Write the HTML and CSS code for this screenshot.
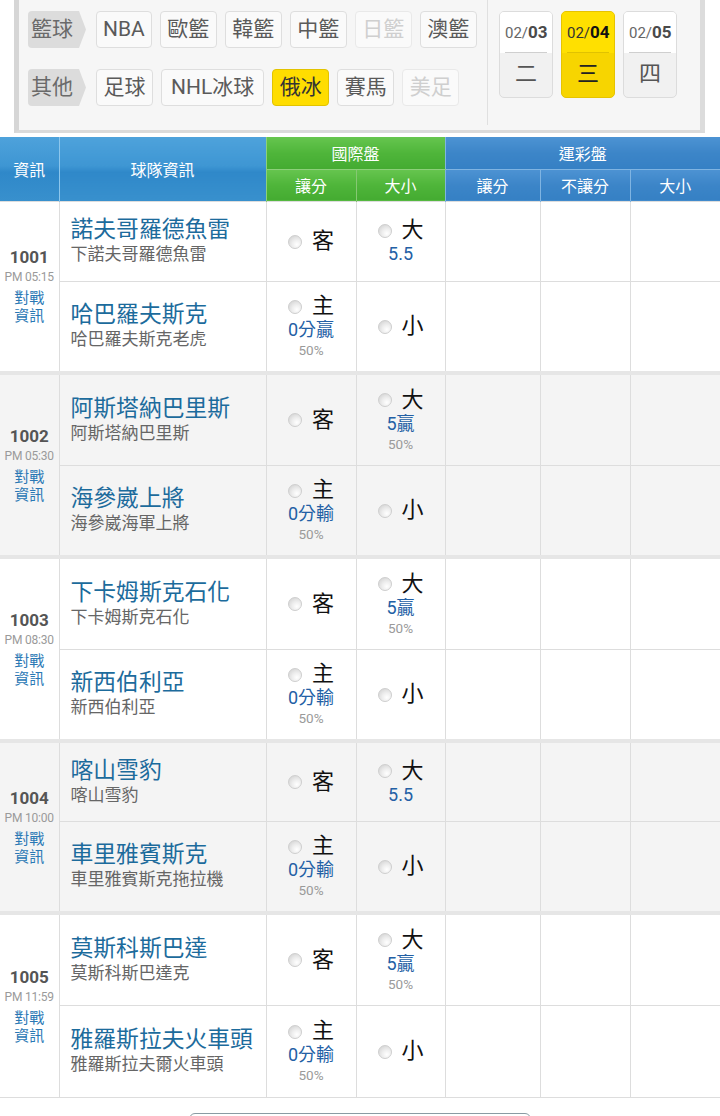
FILE: index.html
```html
<!DOCTYPE html>
<html lang="zh-Hant">
<head>
<meta charset="utf-8">
<title>俄冰</title>
<link rel="stylesheet" href="styles.css">
</head>
<body>
<div class="panel">
  <div class="cats">
    <div class="cat-row">
      <span class="cat-label">籃球</span>
      <span class="btn latin">NBA</span>
      <span class="btn">歐籃</span>
      <span class="btn">韓籃</span>
      <span class="btn">中籃</span>
      <span class="btn off">日籃</span>
      <span class="btn">澳籃</span>
    </div>
    <div class="cat-row">
      <span class="cat-label">其他</span>
      <span class="btn">足球</span>
      <span class="btn wide">NHL冰球</span>
      <span class="btn on">俄冰</span>
      <span class="btn">賽馬</span>
      <span class="btn off">美足</span>
    </div>
  </div>
  <div class="dates">
    <div class="date"><div class="d-top">02/<b>03</b></div><div class="d-bot">二</div></div>
    <div class="date sel"><div class="d-top">02/<b>04</b></div><div class="d-bot">三</div></div>
    <div class="date"><div class="d-top">02/<b>05</b></div><div class="d-bot">四</div></div>
  </div>
</div>

<table class="odds">
  <colgroup>
    <col class="c-info"><col class="c-team"><col class="c-a"><col class="c-b"><col class="c-c"><col class="c-d"><col class="c-e">
  </colgroup>
  <thead>
    <tr class="h1">
      <th rowspan="2" class="hb">資訊</th>
      <th rowspan="2" class="hb">球隊資訊</th>
      <th colspan="2" class="hg">國際盤</th>
      <th colspan="3" class="hs">運彩盤</th>
    </tr>
    <tr class="h2">
      <th class="hg">讓分</th><th class="hg">大小</th>
      <th class="hs">讓分</th><th class="hs">不讓分</th><th class="hs">大小</th>
    </tr>
  </thead>

  <tbody class="match">
    <tr class="short">
      <td rowspan="2" class="info"><div class="num">1001</div><div class="time">PM 05:15</div><div class="vs">對戰<br>資訊</div></td>
      <td class="team"><div class="tname">諾夫哥羅德魚雷</div><div class="tsub">下諾夫哥羅德魚雷</div></td>
      <td class="opt"><div class="pick"><span class="radio"></span><span class="lbl">客</span></div></td>
      <td class="opt"><div class="pick"><span class="radio"></span><span class="lbl">大</span></div><div class="line">5.5</div></td>
      <td></td><td></td><td></td>
    </tr>
    <tr class="tall">
      <td class="team"><div class="tname">哈巴羅夫斯克</div><div class="tsub">哈巴羅夫斯克老虎</div></td>
      <td class="opt"><div class="pick"><span class="radio"></span><span class="lbl">主</span></div><div class="line">0分贏</div><div class="pct">50%</div></td>
      <td class="opt"><div class="pick"><span class="radio"></span><span class="lbl">小</span></div></td>
      <td></td><td></td><td></td>
    </tr>
  </tbody>

  <tbody class="match alt">
    <tr class="tall">
      <td rowspan="2" class="info"><div class="num">1002</div><div class="time">PM 05:30</div><div class="vs">對戰<br>資訊</div></td>
      <td class="team"><div class="tname">阿斯塔納巴里斯</div><div class="tsub">阿斯塔納巴里斯</div></td>
      <td class="opt"><div class="pick"><span class="radio"></span><span class="lbl">客</span></div></td>
      <td class="opt"><div class="pick"><span class="radio"></span><span class="lbl">大</span></div><div class="line">5贏</div><div class="pct">50%</div></td>
      <td></td><td></td><td></td>
    </tr>
    <tr class="tall">
      <td class="team"><div class="tname">海參崴上將</div><div class="tsub">海參崴海軍上將</div></td>
      <td class="opt"><div class="pick"><span class="radio"></span><span class="lbl">主</span></div><div class="line">0分輸</div><div class="pct">50%</div></td>
      <td class="opt"><div class="pick"><span class="radio"></span><span class="lbl">小</span></div></td>
      <td></td><td></td><td></td>
    </tr>
  </tbody>

  <tbody class="match">
    <tr class="tall">
      <td rowspan="2" class="info"><div class="num">1003</div><div class="time">PM 08:30</div><div class="vs">對戰<br>資訊</div></td>
      <td class="team"><div class="tname">下卡姆斯克石化</div><div class="tsub">下卡姆斯克石化</div></td>
      <td class="opt"><div class="pick"><span class="radio"></span><span class="lbl">客</span></div></td>
      <td class="opt"><div class="pick"><span class="radio"></span><span class="lbl">大</span></div><div class="line">5贏</div><div class="pct">50%</div></td>
      <td></td><td></td><td></td>
    </tr>
    <tr class="tall">
      <td class="team"><div class="tname">新西伯利亞</div><div class="tsub">新西伯利亞</div></td>
      <td class="opt"><div class="pick"><span class="radio"></span><span class="lbl">主</span></div><div class="line">0分輸</div><div class="pct">50%</div></td>
      <td class="opt"><div class="pick"><span class="radio"></span><span class="lbl">小</span></div></td>
      <td></td><td></td><td></td>
    </tr>
  </tbody>

  <tbody class="match alt">
    <tr class="short">
      <td rowspan="2" class="info"><div class="num">1004</div><div class="time">PM 10:00</div><div class="vs">對戰<br>資訊</div></td>
      <td class="team"><div class="tname">喀山雪豹</div><div class="tsub">喀山雪豹</div></td>
      <td class="opt"><div class="pick"><span class="radio"></span><span class="lbl">客</span></div></td>
      <td class="opt"><div class="pick"><span class="radio"></span><span class="lbl">大</span></div><div class="line">5.5</div></td>
      <td></td><td></td><td></td>
    </tr>
    <tr class="tall">
      <td class="team"><div class="tname">車里雅賓斯克</div><div class="tsub">車里雅賓斯克拖拉機</div></td>
      <td class="opt"><div class="pick"><span class="radio"></span><span class="lbl">主</span></div><div class="line">0分輸</div><div class="pct">50%</div></td>
      <td class="opt"><div class="pick"><span class="radio"></span><span class="lbl">小</span></div></td>
      <td></td><td></td><td></td>
    </tr>
  </tbody>

  <tbody class="match">
    <tr class="tall">
      <td rowspan="2" class="info"><div class="num">1005</div><div class="time">PM 11:59</div><div class="vs">對戰<br>資訊</div></td>
      <td class="team"><div class="tname">莫斯科斯巴達</div><div class="tsub">莫斯科斯巴達克</div></td>
      <td class="opt"><div class="pick"><span class="radio"></span><span class="lbl">客</span></div></td>
      <td class="opt"><div class="pick"><span class="radio"></span><span class="lbl">大</span></div><div class="line">5贏</div><div class="pct">50%</div></td>
      <td></td><td></td><td></td>
    </tr>
    <tr class="tall">
      <td class="team"><div class="tname">雅羅斯拉夫火車頭</div><div class="tsub">雅羅斯拉夫爾火車頭</div></td>
      <td class="opt"><div class="pick"><span class="radio"></span><span class="lbl">主</span></div><div class="line">0分輸</div><div class="pct">50%</div></td>
      <td class="opt"><div class="pick"><span class="radio"></span><span class="lbl">小</span></div></td>
      <td></td><td></td><td></td>
    </tr>
  </tbody>
</table>

<div class="more"></div>
</body>
</html>
```
FILE: styles.css
```css
* { box-sizing: border-box; }
html, body { margin: 0; padding: 0; background: #fff; }
body {
  font-family: Roboto, "Noto Sans CJK TC", "Noto Sans", sans-serif;
  color: #333;
  width: 720px;
  overflow: hidden;
}

/* ---------- filter panel ---------- */
.panel {
  margin-left: 14px;
  width: 691px;
  height: 133px;
  background: #f6f6f6;
  border-left: 5px solid #d6d6d6;
  border-right: 5px solid #dcdcdc;
  border-bottom: 3px solid #dadada;
  display: flex;
}
.cats {
  width: 469px;
  padding: 11px 0 0 9px;
  border-right: 1px solid #e0e0e0;
  margin-bottom: 5px;
  display: flex;
  flex-direction: column;
  gap: 21px;
}
.cat-row { display: flex; gap: 8px; }
.cat-label {
  height: 37px;
  width: 58px;
  margin-right: 2px;
  padding-left: 3px;
  background: #dcdcdc;
  color: #6a6a6a;
  font-size: 21px;
  line-height: 36px;
  border-radius: 4px 0 0 4px;
  clip-path: polygon(0 0, 51px 0, 58px 50%, 51px 100%, 0 100%);
}
.btn {
  height: 37px;
  padding: 0 6.5px;
  background: #fafafa;
  border: 1px solid #dedede;
  border-radius: 4px;
  color: #5a5a5a;
  font-size: 21px;
  line-height: 34px;
}
.btn.latin { padding: 0 6px; }
.btn.wide { padding: 0 9px; }
.btn.off { color: #cfcfcf; border-color: #e9e9e9; }
.btn.on { background: #ffdd00; border-color: #e2c300; color: #333; }

.dates {
  display: flex;
  gap: 8px;
  padding: 11px 0 0 11px;
}
.date {
  width: 54px;
  height: 87px;
  border: 1px solid #dcdcdc;
  border-radius: 5px;
  overflow: hidden;
  background: #f1f1f1;
}
.d-top {
  height: 41px;
  margin: 0 5px;
  background: #fff;
  border-bottom: 1px solid #cfcfcf;
  text-align: center;
  font-size: 15px;
  line-height: 40px;
  color: #666;
  box-shadow: -6px 0 0 #fff, 6px 0 0 #fff;
}
.d-top b { font-size: 17px; color: #4a4a4a; }
.d-bot {
  text-align: center;
  font-size: 22px;
  line-height: 42px;
  color: #555;
}
.date.sel { background: #f7d500; border-color: #e6c300; }
.date.sel .d-top { background: #ffe000; box-shadow: -6px 0 0 #ffe000, 6px 0 0 #ffe000; border-bottom-color: #e0c200; color: #333; }
.date.sel .d-top b { color: #111; }
.date.sel .d-bot { color: #222; }

/* ---------- odds table ---------- */
.odds {
  margin-top: 4px;
  width: 720px;
  border-collapse: collapse;
  table-layout: fixed;
}
.c-info { width: 59px; }
.c-team { width: 207px; }
.c-a { width: 90px; }
.c-b { width: 89px; }
.c-c { width: 95px; }
.c-d { width: 90px; }
.c-e { width: 90px; }

.odds th {
  color: #fff;
  font-weight: normal;
  font-size: 16px;
  padding: 0;
  text-align: center;
}
.h1 th { height: 32px; }
.h2 th { height: 32px; }
.hb {
  font-size: 17px;
  background: linear-gradient(#4ea2db 0%, #3e96d3 45%, #2f88c9 55%, #3890cd 100%);
  border-left: 1px solid #8cc6ec;
}
.hb:first-child { border-left: none; }
.hg {
  background: linear-gradient(#66c54f 0%, #4fb53a 50%, #44ab31 100%);
  border-left: 1px solid #8dd07a;
  border-bottom: 1px solid #8dd07a;
}
.h2 .hg { border-bottom: none; }
.h2 .hg + .hg { border-left: 1px solid #86c873; }
.hs {
  background: linear-gradient(#4d93d3 0%, #3c85c8 50%, #3580c4 100%);
  border-left: 1px solid #7fb4e2;
  border-bottom: 1px solid #7fb4e2;
}
.h2 .hs { border-bottom: none; }

.odds td {
  border: 1px solid #dddddd;
  padding: 0;
  text-align: center;
  vertical-align: middle;
}
.odds td:last-child { border-right: none; }
.odds td.info { border-left: none; }
.match.alt td { background: #f4f4f4; }
.match + .match tr:first-child td { border-top: 4px solid #e6e6e6; }
tr.short td { height: 80px; }
tr.tall td { height: 92px; }

.num { font-size: 17px; font-weight: bold; color: #555; line-height: 21px; }
.time { font-size: 12px; color: #9a9a9a; line-height: 18px; letter-spacing: -0.2px; }
.vs { font-size: 15px; color: #2a78b5; line-height: 18px; margin-top: 3px; }

.odds td.team { text-align: left; padding-left: 11px; }
.tname { font-size: 22.8px; color: #1c6b9c; line-height: 27px; }
.tsub { font-size: 17px; color: #666; line-height: 23px; }

.pick { display: flex; align-items: center; justify-content: center; }
.radio {
  width: 14px;
  height: 14px;
  border-radius: 50%;
  border: 1px solid #cfcfcf;
  background: radial-gradient(circle at 65% 70%, #ffffff 0%, #eeeeee 40%, #cdcdcd 100%);
  margin-right: 10px;
  margin-top: 1px;
}
.lbl { font-size: 22px; color: #111; line-height: 26px; }
.line { font-size: 18px; color: #2360a5; line-height: 22px; }
.pct { font-size: 13.5px; color: #9a9a9a; line-height: 18px; }

.more {
  width: 342px;
  height: 20px;
  margin: 15px auto 0;
  border: 1px solid #8a9ba3;
  border-radius: 6px;
  background: #fff;
}
```
